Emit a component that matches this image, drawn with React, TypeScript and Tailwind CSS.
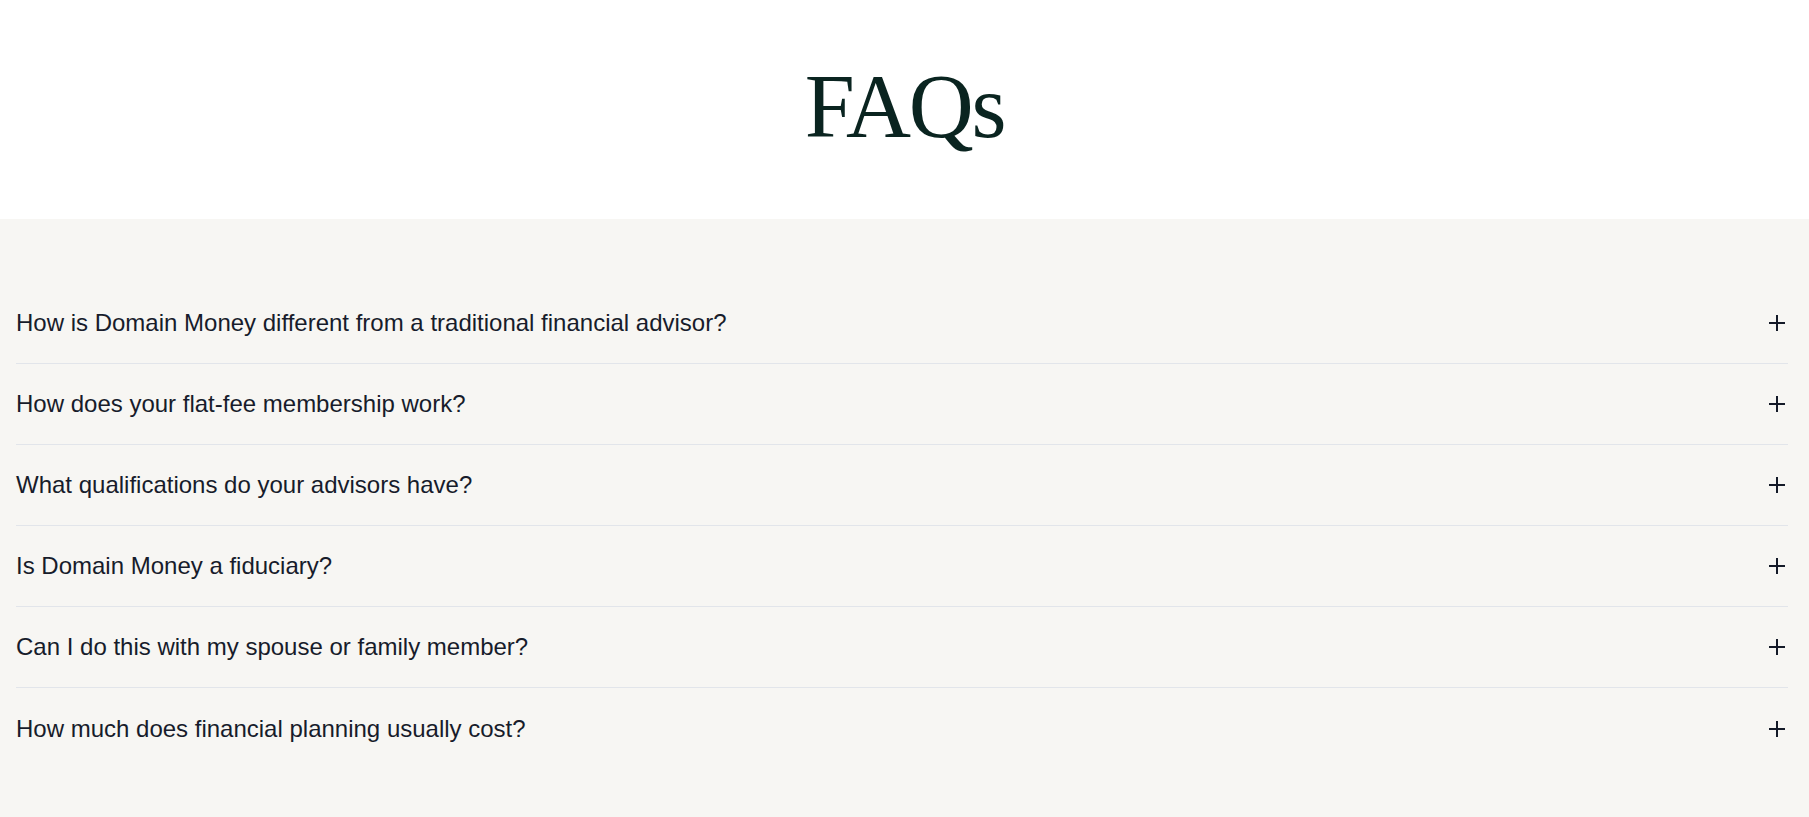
import React from "react";

const questions = [
  "How is Domain Money different from a traditional financial advisor?",
  "How does your flat-fee membership work?",
  "What qualifications do your advisors have?",
  "Is Domain Money a fiduciary?",
  "Can I do this with my spouse or family member?",
  "How much does financial planning usually cost?",
];

function PlusIcon() {
  return (
    <svg width="16" height="16" viewBox="0 0 16 16" className="mr-[3px] shrink-0">
      <path d="M8 0v16M0 8h16" stroke="#141a28" strokeWidth="2" fill="none" />
    </svg>
  );
}

export default function App() {
  return (
    <div className="w-full min-h-screen bg-[#f7f6f3]">
      <div className="bg-white h-[219px] flex items-center justify-center">
        <h1
          className="text-[90px] leading-none text-[#0a2420] tracking-[-0.025em] mt-[-6px]"
          style={{ fontFamily: '"Liberation Serif", "Times New Roman", serif' }}
        >
          FAQs
        </h1>
      </div>
      <div
        className="pt-[64px] pl-4 pr-[21px]"
        style={{ fontFamily: '"Liberation Sans", Arial, Helvetica, sans-serif' }}
      >
        {questions.map((q, i) => (
          <div
            key={i}
            className={
              "flex items-center justify-between h-[81px] " +
              (i < questions.length - 1 ? "border-b border-[#e2e5ea]" : "")
            }
          >
            <span className="text-[24px] text-[#171c2b]">{q}</span>
            <PlusIcon />
          </div>
        ))}
      </div>
    </div>
  );
}
